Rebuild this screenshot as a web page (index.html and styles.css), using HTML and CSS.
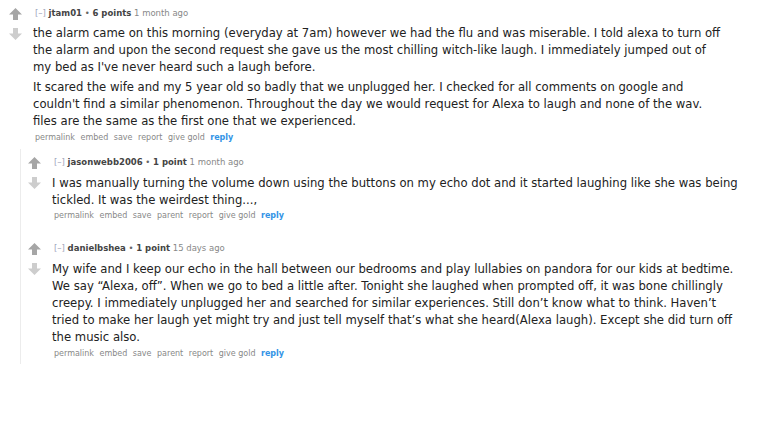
FILE: index.html
```html
<!DOCTYPE html>
<html lang="en">
<head>
    <meta charset="UTF-8">
    <meta name="viewport" content="width=device-width, initial-scale=1.0">
    <title>Comments</title>
    <link rel="stylesheet" href="styles.css">
</head>
<body>
    <div class="comment top">
        <div class="midcol">
            <svg class="arrow up" viewBox="0 0 13 12"><polygon points="6.5,0 13,6.5 9,6.5 9,12 4,12 4,6.5 0,6.5"/></svg>
            <svg class="arrow down" viewBox="0 0 13 12"><polygon points="6.5,12 13,5.5 9,5.5 9,0 4,0 4,5.5 0,5.5"/></svg>
        </div>
        <div class="entry">
            <p class="tagline"><span class="expand">[&ndash;]</span> <span class="author">jtam01</span> <span class="dot">&bull;</span> <span class="score">6 points</span> <span class="time">1 month ago</span></p>
            <div class="md">
                <p>the alarm came on this morning (everyday at 7am) however we had the flu and was miserable. I told alexa to turn off<br>the alarm and upon the second request she gave us the most chilling witch-like laugh. I immediately jumped out of<br>my bed as I've never heard such a laugh before.</p>
                <p>It scared the wife and my 5 year old so badly that we unplugged her. I checked for all comments on google and<br>couldn't find a similar phenomenon. Throughout the day we would request for Alexa to laugh and none of the wav.<br>files are the same as the first one that we experienced.</p>
            </div>
            <ul class="buttons">
                <li>permalink</li><li>embed</li><li>save</li><li>report</li><li>give gold</li><li class="reply">reply</li>
            </ul>
        </div>
    </div>

    <div class="children">
        <div class="comment">
            <div class="midcol">
                <svg class="arrow up" viewBox="0 0 13 12"><polygon points="6.5,0 13,6.5 9,6.5 9,12 4,12 4,6.5 0,6.5"/></svg>
                <svg class="arrow down" viewBox="0 0 13 12"><polygon points="6.5,12 13,5.5 9,5.5 9,0 4,0 4,5.5 0,5.5"/></svg>
            </div>
            <div class="entry">
                <p class="tagline"><span class="expand">[&ndash;]</span> <span class="author">jasonwebb2006</span> <span class="dot">&bull;</span> <span class="score">1 point</span> <span class="time">1 month ago</span></p>
                <div class="md">
                    <p>I was manually turning the volume down using the buttons on my echo dot and it started laughing like she was being<br>tickled. It was the weirdest thing...,</p>
                </div>
                <ul class="buttons">
                    <li>permalink</li><li>embed</li><li>save</li><li>parent</li><li>report</li><li>give gold</li><li class="reply">reply</li>
                </ul>
            </div>
        </div>

        <div class="comment">
            <div class="midcol">
                <svg class="arrow up" viewBox="0 0 13 12"><polygon points="6.5,0 13,6.5 9,6.5 9,12 4,12 4,6.5 0,6.5"/></svg>
                <svg class="arrow down" viewBox="0 0 13 12"><polygon points="6.5,12 13,5.5 9,5.5 9,0 4,0 4,5.5 0,5.5"/></svg>
            </div>
            <div class="entry">
                <p class="tagline"><span class="expand">[&ndash;]</span> <span class="author">danielbshea</span> <span class="dot">&bull;</span> <span class="score">1 point</span> <span class="time">15 days ago</span></p>
                <div class="md">
                    <p>My wife and I keep our echo in the hall between our bedrooms and play lullabies on pandora for our kids at bedtime.<br>We say &ldquo;Alexa, off&rdquo;. When we go to bed a little after. Tonight she laughed when prompted off, it was bone chillingly<br>creepy. I immediately unplugged her and searched for similar experiences. Still don&rsquo;t know what to think. Haven&rsquo;t<br>tried to make her laugh yet might try and just tell myself that&rsquo;s what she heard(Alexa laugh). Except she did turn off<br>the music also.</p>
                </div>
                <ul class="buttons">
                    <li>permalink</li><li>embed</li><li>save</li><li>parent</li><li>report</li><li>give gold</li><li class="reply">reply</li>
                </ul>
            </div>
        </div>
    </div>
</body>
</html>
```

FILE: styles.css
```css
body {
    margin: 0;
    background-color: #ffffff;
    font-family: "DejaVu Sans", Verdana, sans-serif;
    color: #222;
}

.comment {
    display: flex;
    padding-left: 9px;
}

.midcol {
    width: 24px;
    flex-shrink: 0;
    display: flex;
    flex-direction: column;
    padding-top: 8px;
}

.arrow {
    width: 13px;
    height: 12px;
}

.arrow.up {
    fill: #a6a6a6;
}

.arrow.down {
    fill: #cdcdcd;
    margin-top: 8px;
}

.entry {
    flex: 1;
}

.tagline {
    margin: 0;
    padding-top: 7px;
    font-size: 8.5px;
    line-height: 12px;
    color: #888;
    white-space: nowrap;
}

.tagline .expand {
    color: #a0a6bc;
    margin-left: 2px;
}

.tagline .author,
.tagline .score {
    font-weight: bold;
    color: #444;
}

.tagline .dot {
    color: #666;
}

.md {
    margin-top: 6px;
    font-size: 11.65px;
    line-height: 17px;
    white-space: nowrap;
}

.md p {
    margin: 0 0 3px;
}

.md p:last-child {
    margin-bottom: 0;
}

.buttons {
    list-style: none;
    margin: 0;
    padding: 1.5px 0 0 2px;
    display: flex;
    gap: 5.5px;
    font-size: 8px;
    line-height: 12px;
    color: #888;
}

.buttons .reply {
    font-weight: bold;
    color: #3394e6;
}

.children {
    margin: 5px 0 0 20px;
    padding-bottom: 4px;
    border-left: 1px solid #ececec;
}

.children .comment {
    padding-left: 7px;
}

.children .comment + .comment {
    margin-top: 13px;
}

.children .md {
    margin-top: 7px;
}
```
